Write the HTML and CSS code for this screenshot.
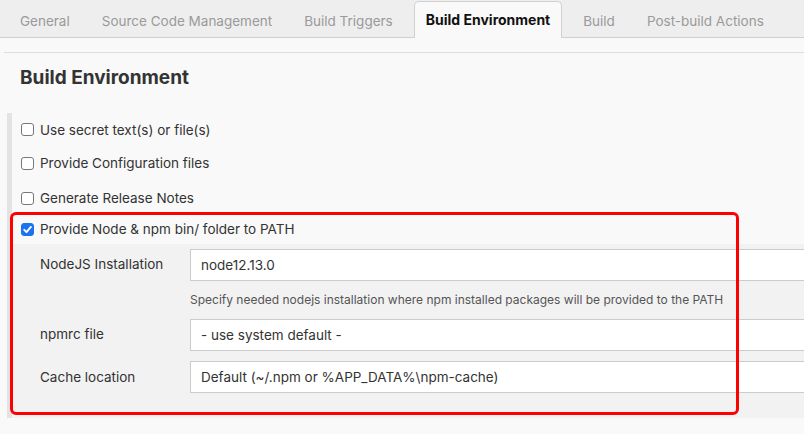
FILE: index.html
```html
<!DOCTYPE html>
<html>
<head>
<meta charset="utf-8">
<link rel="stylesheet" href="styles.css">
</head>
<body>
<div class="tabs">
  <div class="tab">General</div>
  <div class="tab">Source Code Management</div>
  <div class="tab">Build Triggers</div>
  <div class="tab active">Build Environment</div>
  <div class="tab">Build</div>
  <div class="tab">Post-build Actions</div>
</div>
<div class="section">
  <h2 class="title">Build Environment</h2>
  <div class="block">
    <label class="cb-row r1"><span class="cb"></span>Use secret text(s) or file(s)</label>
    <label class="cb-row r2"><span class="cb"></span>Provide Configuration files</label>
    <label class="cb-row r3"><span class="cb"></span>Generate Release Notes</label>
    <label class="cb-row r4"><span class="cb checked"><svg viewBox="0 0 13 13" width="13" height="13"><path d="M3.2 6.8 L5.5 9.1 L9.9 3.9" fill="none" stroke="#fff" stroke-width="1.9" stroke-linecap="round" stroke-linejoin="round"/></svg></span>Provide Node &amp; npm bin/ folder to PATH</label>
    <div class="nested">
      <div class="lbl">NodeJS Installation</div>
      <div class="inp">node12.13.0</div>
      <div></div>
      <div class="help">Specify needed nodejs installation where npm installed packages will be provided to the PATH</div>
      <div class="lbl">npmrc file</div>
      <div class="inp">- use system default -</div>
      <div class="lbl gap">Cache location</div>
      <div class="inp gap">Default (~/.npm or %APP_DATA%\npm-cache)</div>
    </div>
  </div>
</div>
<div class="highlight"></div>
</body>
</html>
```
FILE: styles.css
```css
html, body {
  margin: 0;
  padding: 0;
}
body {
  position: relative;
  width: 804px;
  height: 434px;
  overflow: hidden;
  background: #f9f9f9;
  font-family: Inter, "Noto Sans", sans-serif;
  color: #333;
}
.tabs {
  display: flex;
  align-items: flex-end;
  height: 37px;
  background: #eeeeee;
  border-bottom: 1px solid #cfcfcf;
  padding-left: 4px;
}
.tab {
  height: 35px;
  line-height: 38px;
  padding: 0 16px;
  font-size: 13.5px;
  color: #9a9a9a;
  box-sizing: border-box;
  white-space: nowrap;
}
.tab.active {
  line-height: 36px;
  margin: 0 5px -1px 5px;
  padding: 0 11px 0 11px;
  background: #f9f9f9;
  border: 1px solid #d0d0d0;
  border-bottom: none;
  border-radius: 5px 5px 0 0;
  color: #111;
  font-size: 14px;
  font-weight: 700;
  height: 37px;
}
.section {
  margin: 14px 0 0 4px;
  border-top: 1px solid #dedede;
}
.title {
  margin: 0;
  padding: 13px 0 0 16px;
  height: 46px;
  box-sizing: border-box;
  font-size: 19px;
  font-weight: 700;
  color: #333;
  line-height: 24px;
}
.block {
  margin: 14px 0 0 3px;
  border-left: 5px solid #e3e3e3;
}
.cb-row {
  display: flex;
  align-items: center;
  gap: 6px;
  padding-left: 9px;
  font-size: 13.5px;
  color: #333;
  height: 34px;
}
.r1 { height: 33px; }
.r3 { margin-top: 1px; }
.r4 { height: 30px; margin-top: -1px; }
.cb {
  width: 13px;
  height: 13px;
  box-sizing: border-box;
  border: 1px solid #777;
  border-radius: 3px;
  background: #fff;
  display: flex;
}
.cb.checked {
  background: #1a73f0;
  border-color: #1a73f0;
}
.cb.checked svg { margin: -1px; }
.nested {
  background: #f2f2f2;
  display: grid;
  grid-template-columns: 150px 1fr;
  align-items: center;
  padding: 5px 0 25px 28px;
}
.lbl {
  font-size: 13.5px;
  color: #333;
  margin-top: -2px;
}
.inp {
  height: 32px;
  box-sizing: border-box;
  border: 1px solid #cccccc;
  border-right: none;
  background: #fff;
  padding-left: 10px;
  font-size: 13.5px;
  line-height: 31px;
  color: #333;
  white-space: nowrap;
}
.help {
  font-size: 12px;
  color: #555;
  height: 38px;
  line-height: 38px;
  white-space: nowrap;
}
.gap { margin-top: 10px; }
.highlight {
  position: absolute;
  left: 10px;
  top: 212px;
  width: 729px;
  height: 203px;
  box-sizing: border-box;
  border: 3px solid #ff0000;
  border-radius: 6px;
}
```
